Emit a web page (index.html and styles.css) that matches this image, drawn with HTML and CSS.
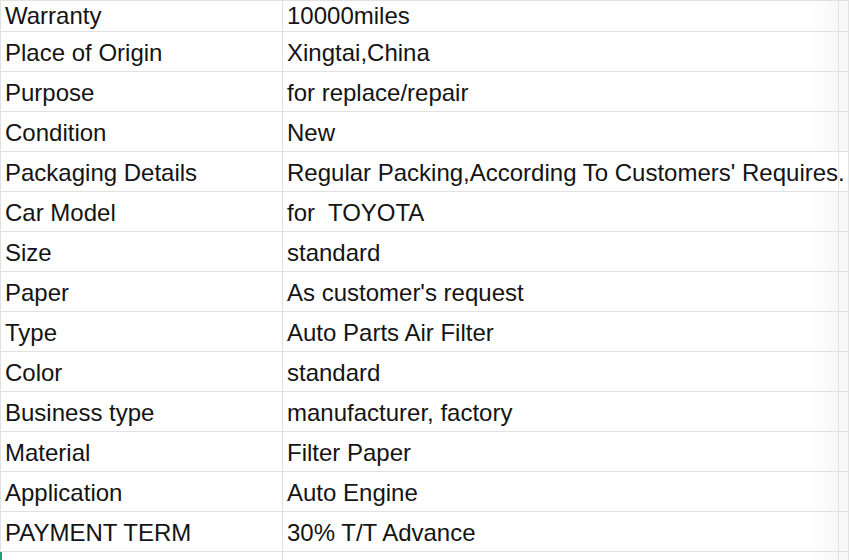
FILE: index.html
```html
<!DOCTYPE html>
<html lang="en">
<head>
    <meta charset="UTF-8">
    <meta name="viewport" content="width=device-width, initial-scale=1.0">
    <title>Product Details</title>
    <link rel="stylesheet" href="styles.css">
</head>
<body>
    <div class="sheet">
        <div class="cell key first">Warranty</div>
        <div class="cell value first">10000miles</div>
        <div class="cell extra first"></div>

        <div class="cell key">Place of Origin</div>
        <div class="cell value">Xingtai,China</div>
        <div class="cell extra"></div>

        <div class="cell key">Purpose</div>
        <div class="cell value">for replace/repair</div>
        <div class="cell extra"></div>

        <div class="cell key">Condition</div>
        <div class="cell value">New</div>
        <div class="cell extra"></div>

        <div class="cell key">Packaging Details</div>
        <div class="cell value spill">Regular Packing,According To Customers' Requires.</div>
        <div class="cell extra covered"></div>

        <div class="cell key">Car Model</div>
        <div class="cell value">for&nbsp; TOYOTA</div>
        <div class="cell extra"></div>

        <div class="cell key">Size</div>
        <div class="cell value">standard</div>
        <div class="cell extra"></div>

        <div class="cell key">Paper</div>
        <div class="cell value">As customer's request</div>
        <div class="cell extra"></div>

        <div class="cell key">Type</div>
        <div class="cell value">Auto Parts Air Filter</div>
        <div class="cell extra"></div>

        <div class="cell key">Color</div>
        <div class="cell value">standard</div>
        <div class="cell extra"></div>

        <div class="cell key">Business type</div>
        <div class="cell value">manufacturer, factory</div>
        <div class="cell extra"></div>

        <div class="cell key">Material</div>
        <div class="cell value">Filter Paper</div>
        <div class="cell extra"></div>

        <div class="cell key">Application</div>
        <div class="cell value">Auto Engine</div>
        <div class="cell extra"></div>

        <div class="cell key">PAYMENT TERM</div>
        <div class="cell value">30% T/T Advance</div>
        <div class="cell extra"></div>

        <div class="cell key"></div>
        <div class="cell value"></div>
        <div class="cell extra"></div>
    </div>
    <div class="cursor"></div>
</body>
</html>
```

FILE: styles.css
```css
body {
    margin: 0;
    font-family: "Liberation Sans", Arial, sans-serif;
    background-color: #fff;
    color: #141414;
    overflow: hidden;
}
.sheet {
    display: grid;
    grid-template-columns: 282px 556px 1fr;
    grid-template-rows: 31px repeat(14, 40px);
    height: 560px;
    overflow: hidden;
    border-top: 1px solid #e1e1e1;
    border-left: 1px solid #e1e1e1;
    box-sizing: border-box;
}
.cell {
    display: flex;
    align-items: center;
    padding: 3px 4px 0;
    font-size: 24px;
    white-space: nowrap;
    border-right: 1px solid #e1e1e1;
    border-bottom: 1px solid #e1e1e1;
    box-sizing: border-box;
    min-width: 0;
}
.cell.first {
    padding-top: 0;
}
.value {
    background: linear-gradient(to right, #fff calc(100% - 28px), #f7f7f7);
}
.spill {
    position: relative;
    z-index: 1;
    overflow: visible;
    background: #fff;
}
.extra {
    background-color: #f9f9f9;
}
.covered {
    background-color: #fff;
}
.cursor {
    position: absolute;
    left: 0;
    top: 552px;
    width: 2px;
    height: 8px;
    background-color: #1aa36f;
}
```
